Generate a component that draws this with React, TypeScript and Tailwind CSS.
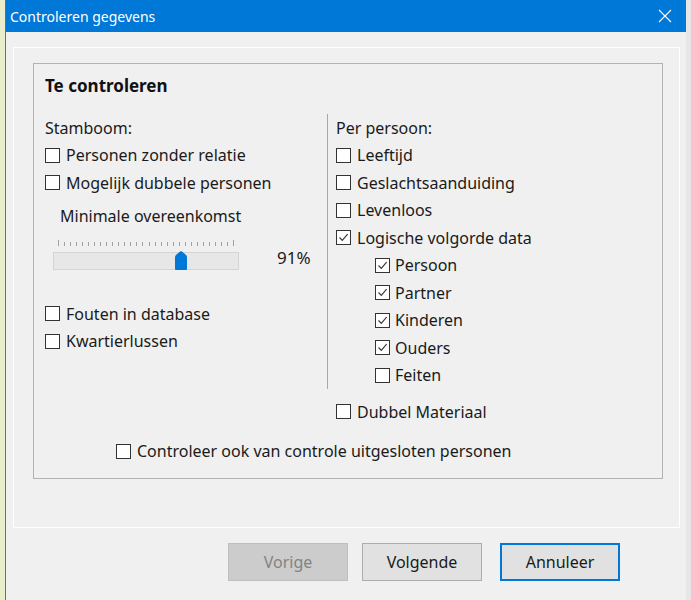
import React from "react";

const FONT = { fontFamily: '"Noto Sans", "Open Sans", Arial, sans-serif' };

function Box({ checked }: { checked?: boolean }) {
  return (
    <span className="w-[15px] h-[15px] border border-[#333333] bg-white flex items-center justify-center shrink-0">
      {checked && (
        <svg width="11" height="11" viewBox="0 0 11 11">
          <path d="M1.5 5.5 L4.3 8.3 L9.6 2.2" stroke="#3a3a3a" strokeWidth="1.2" fill="none" />
        </svg>
      )}
    </span>
  );
}

function Row({ label, checked, sub }: { label: string; checked?: boolean; sub?: boolean }) {
  return (
    <div className={`flex items-center h-[27.5px] ${sub ? "pl-[39px] gap-[5px]" : "gap-[6px]"}`}>
      <Box checked={checked} />
      <span className="whitespace-nowrap">{label}</span>
    </div>
  );
}

function Slider() {
  const ticks = Array.from({ length: 30 }, (_, i) => 5 + (i * 175) / 29);
  return (
    <div className="w-[186px] flex flex-col">
      <svg width="186" height="16" className="block">
        {ticks.map((x, i) => (
          <line
            key={i}
            x1={Math.round(x) + 0.5}
            x2={Math.round(x) + 0.5}
            y1={i === 0 || i === 29 ? 10 : 12}
            y2={16}
            stroke="#a0a0a0"
            strokeWidth="1"
          />
        ))}
      </svg>
      <div className="relative mt-[6px] h-[18px] bg-[#e7e7e7] border border-[#d4d4d4]">
        <svg width="12" height="19" viewBox="0 0 12 19" className="absolute left-[121px] top-[-2px]">
          <path d="M0 6 Q0 4.5 1.5 3.5 L5 0.6 Q6 0 7 0.6 L10.5 3.5 Q12 4.5 12 6 L12 18 Q12 19 11 19 L1 19 Q0 19 0 18 Z" fill="#0078d7" />
        </svg>
      </div>
    </div>
  );
}

export default function App() {
  return (
    <div className="w-[691px] h-[600px] flex overflow-hidden bg-[#f0f0f0] text-[16px] text-[#1a1a1a]" style={FONT}>
      <div className="w-[5px] bg-[#e9edc9]" />
      <div className="w-[681px] flex flex-col border-l border-[#2b7bd0] bg-[#f0f0f0]">
        <div className="h-[32px] shrink-0 bg-[#0078d7] flex items-center justify-between pl-[4px] pr-[14px] text-white">
          <span className="text-[14px]">Controleren gegevens</span>
          <svg width="14" height="14" viewBox="0 0 14 14">
            <path d="M1 1 L13 13 M13 1 L1 13" stroke="white" strokeWidth="1.1" />
          </svg>
        </div>
        <div className="flex-1 flex flex-col">
          <div className="ml-[7px] mt-[15px] w-[667px] h-[481px] border border-white">
            <div className="ml-[19px] mt-[15px] w-[630px] h-[416px] border border-[#b3b3b3] pl-[11px]">
              <div className="mt-[11px] h-[22px] leading-[22px] font-bold text-[17px] text-[#111]">Te controleren</div>
              <div className="mt-[17px] flex">
                <div className="w-[282px] flex flex-col">
                  <div className="h-[27.5px] flex items-center">Stamboom:</div>
                  <Row label="Personen zonder relatie" />
                  <Row label="Mogelijk dubbele personen" />
                  <div className="mt-[6px] h-[27.5px] pl-[15px] flex items-center">Minimale overeenkomst</div>
                  <div className="flex items-start ml-[8px]">
                    <Slider />
                    <div className="ml-[38px] mt-[18px] h-[20px] leading-[20px] text-[17px]">91%</div>
                  </div>
                  <div className="mt-[30px]">
                    <Row label="Fouten in database" />
                    <Row label="Kwartierlussen" />
                  </div>
                </div>
                <div className="border-l border-[#a8a8a8] pl-[8px] flex flex-col">
                  <div className="h-[27.5px] flex items-center">Per persoon:</div>
                  <Row label="Leeftijd" />
                  <Row label="Geslachtsaanduiding" />
                  <Row label="Levenloos" />
                  <Row label="Logische volgorde data" checked />
                  <Row label="Persoon" checked sub />
                  <Row label="Partner" checked sub />
                  <Row label="Kinderen" checked sub />
                  <Row label="Ouders" checked sub />
                  <Row label="Feiten" sub />
                </div>
              </div>
              <div className="mt-[9px] ml-[291px]">
                <Row label="Dubbel Materiaal" />
              </div>
              <div className="mt-[12px] ml-[71px]">
                <Row label="Controleer ook van controle uitgesloten personen" />
              </div>
            </div>
          </div>
          <div className="mt-[15px] flex pl-[222px]">
            <div className="w-[120px] h-[38px] bg-[#cccccc] border border-[#bfbfbf] text-[#838383] flex items-center justify-center">Vorige</div>
            <div className="ml-[14px] w-[120px] h-[38px] bg-[#e1e1e1] border border-[#adadad] flex items-center justify-center">Volgende</div>
            <div className="ml-[18px] w-[120px] h-[38px] bg-[#e1e1e1] border-2 border-[#0078d7] flex items-center justify-center">Annuleer</div>
          </div>
        </div>
      </div>
      <div className="w-[5px] bg-[#e6e6e6]" />
    </div>
  );
}
